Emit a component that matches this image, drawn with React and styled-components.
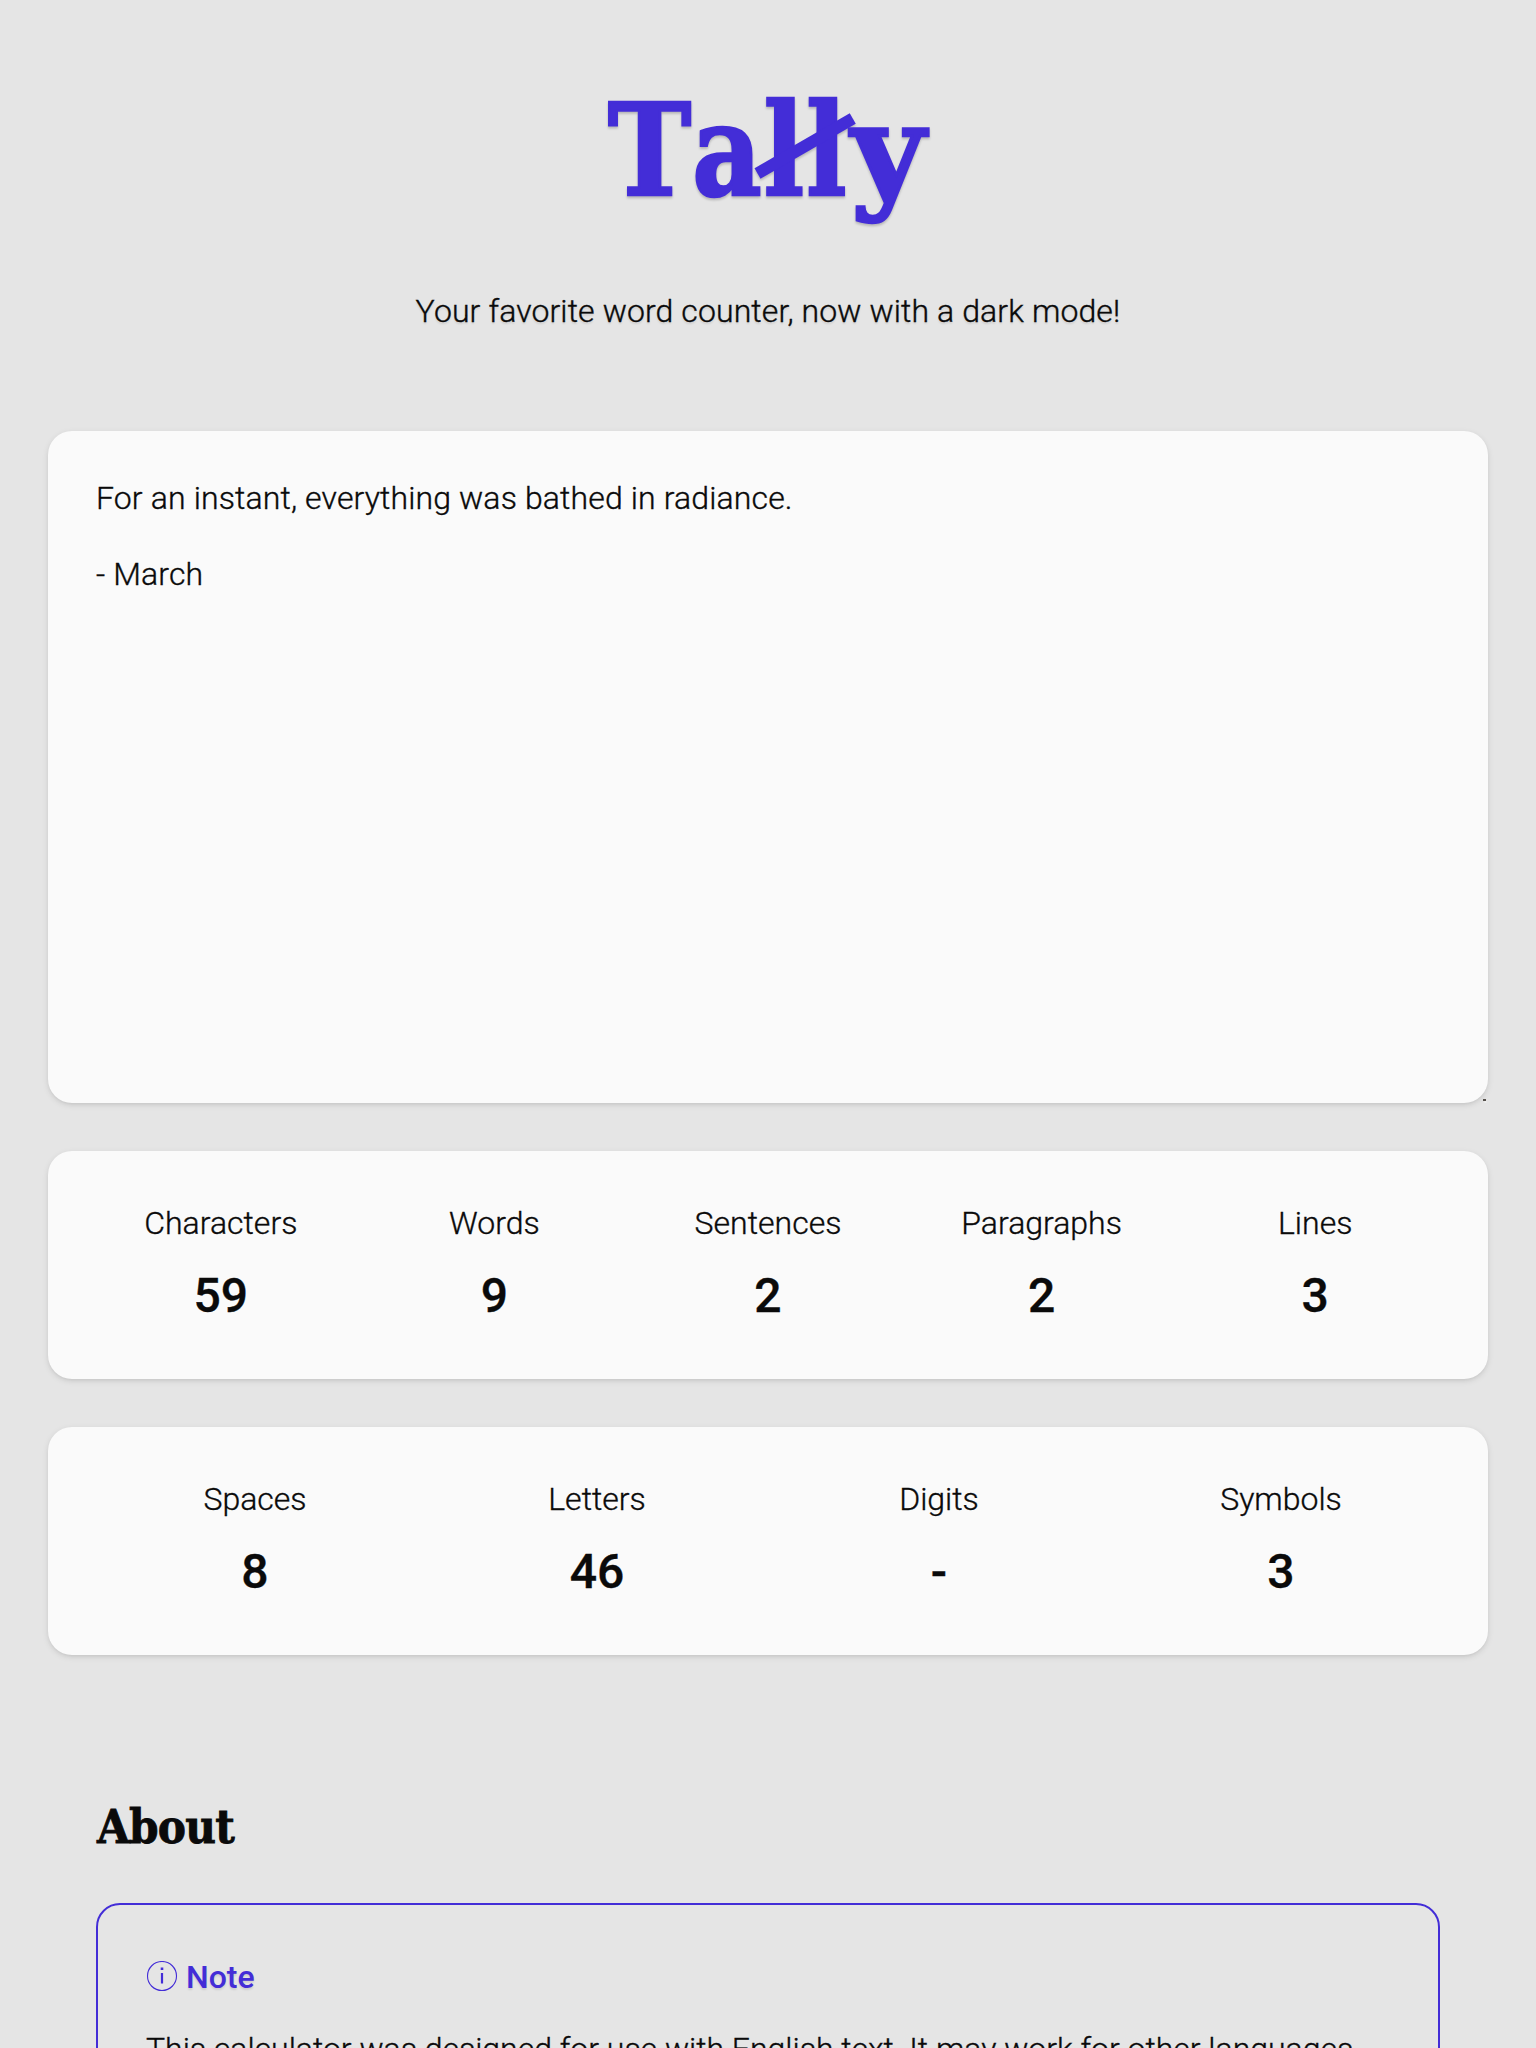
import React from "react";
import styled, { createGlobalStyle } from "styled-components";

const Global = createGlobalStyle`
  * { box-sizing: border-box; }
  html, body { margin: 0; background: #e5e5e5; }
  body {
    font-family: Roboto, "Liberation Sans", sans-serif;
    font-size: 32px;
    line-height: 48px;
    font-weight: 300;
    color: #0a0a0a;
    -webkit-text-stroke: 0.35px currentColor;
  }
`;
const Page = styled.main`
  display: flex;
  flex-direction: column;
  height: 2048px;
  padding: 0 48px;
  overflow: hidden;
`;
const Header = styled.header`
  display: flex;
  flex-direction: column;
  align-items: center;
  flex: none;
  height: 431px;
  padding-top: 70px;
`;
const Logo = styled.h1`
  position: relative;
  display: flex;
  margin: 0;
  height: 160px;
  color: #432dd7;
  font: 700 128px/160px "DejaVu Serif Condensed", "DejaVu Serif", serif;
  font-stretch: condensed;
  -webkit-text-stroke: 2.6px #432dd7;
  filter: drop-shadow(0 2px 1px rgb(0 0 0 / 0.2));
`;
const Letter = styled.span`
  display: flex;
  justify-content: center;
  width: ${(p) => p.$width}px;
  transform: scaleX(${(p) => p.$stretch || 1});
`;
const Strike = styled.span`
  position: absolute;
  left: 142px;
  top: 70px;
  width: 110px;
  height: 11.5px;
  background: #432dd7;
  transform: rotate(-30deg);
`;
const Tagline = styled.p`
  margin: 57px 0 0;
  letter-spacing: 0.11px;
  text-shadow: 0 2px 2px rgb(0 0 0 / 0.1);
`;
const panel = `
  border-radius: 24px;
  background: #fafafa;
  box-shadow: 0 2px 6px rgb(0 0 0 / 0.1), 0 2px 4px -2px rgb(0 0 0 / 0.1);
`;
const EditorWrap = styled.div`
  position: relative;
  display: flex;
  flex: none;
  height: 672px;
`;
const Editor = styled.textarea`
  ${panel}
  flex: 1;
  border: 0;
  padding: 48px;
  font: inherit;
  line-height: 38px;
  letter-spacing: 0.13px;
  color: inherit;
  resize: none;
  outline: none;
`;
const Grip = styled.i`
  position: absolute;
  right: 2px;
  bottom: 2px;
  width: 3px;
  height: 2px;
  background: #544f4a;
  box-shadow: 1px 2px 0 -0.5px #fafafa;
`;
const Card = styled.section`
  ${panel}
  display: grid;
  grid-template-columns: repeat(${(p) => p.$columns}, 1fr);
  flex: none;
  height: 228px;
  margin-top: 48px;
  padding: 48px 36px;
`;
const Stat = styled.div`
  display: flex;
  flex-direction: column;
  align-items: center;
  gap: 13px;
`;
const Value = styled.b`
  font-size: 48px;
  line-height: 72px;
  font-weight: 500;
`;
const About = styled.section`
  display: flex;
  flex-direction: column;
  gap: 40px;
  padding: 136px 48px 0;
`;
const Heading = styled.h2`
  margin: 0;
  padding-left: 1px;
  font: 700 47px/72px "DejaVu Serif Condensed", "DejaVu Serif", serif;
  font-stretch: condensed;
  letter-spacing: -0.8px;
  -webkit-text-stroke: 0.8px #0a0a0a;
`;
const Note = styled.aside`
  display: flex;
  flex-direction: column;
  gap: 24px;
  padding: 48px;
  border: 2px solid #432dd7;
  border-radius: 24px;
`;
const NoteTitle = styled.div`
  display: flex;
  align-items: center;
  gap: 8px;
  height: 48px;
  color: #432dd7;
  font-weight: 500;
  -webkit-text-stroke: 0;
  text-shadow: 0 2px 2px rgb(0 0 0 / 0.1);
`;
const NoteText = styled.p`
  margin: 0;
  white-space: nowrap;
  letter-spacing: -0.015px;
`;

const InfoIcon = () => (
  <svg width="32" height="32" viewBox="0 0 32 32" fill="none" stroke="#432dd7">
    <circle cx="16" cy="15" r="14.5" strokeWidth="1.1" />
    <path d="M16 12v10.5" strokeWidth="2.2" />
    <path d="M16 6.5v2.5" strokeWidth="2.6" />
  </svg>
);

const totals = [["Characters", "59"], ["Words", "9"], ["Sentences", "2"], ["Paragraphs", "2"], ["Lines", "3"]];
const kinds = [["Spaces", "8"], ["Letters", "46"], ["Digits", "-"], ["Symbols", "3"]];

const Stats = ({ items }) => (
  <Card $columns={items.length}>
    {items.map(([label, value]) => (
      <Stat key={label}>
        <span>{label}</span>
        <Value>{value}</Value>
      </Stat>
    ))}
  </Card>
);

export default function App() {
  return (
    <>
      <Global />
      <Page>
        <Header>
          <Logo>
            <Letter $width={83} $stretch={0.97}>T</Letter>
            <Letter $width={72} $stretch={0.93}>a</Letter>
            <Letter $width={42} $stretch={0.92}>l</Letter>
            <Letter $width={43} $stretch={0.92}>l</Letter>
            <Letter $width={80} $stretch={1.11}>y</Letter>
            <Strike />
          </Logo>
          <Tagline>Your favorite word counter, now with a dark mode!</Tagline>
        </Header>
        <EditorWrap>
          <Editor spellCheck={false} defaultValue={"For an instant, everything was bathed in radiance.\n\n- March"} />
          <Grip />
        </EditorWrap>
        <Stats items={totals} />
        <Stats items={kinds} />
        <About>
          <Heading>About</Heading>
          <Note>
            <NoteTitle><InfoIcon />Note</NoteTitle>
            <NoteText>This calculator was designed for use with English text. It may work for other languages,</NoteText>
          </Note>
        </About>
      </Page>
    </>
  );
}
